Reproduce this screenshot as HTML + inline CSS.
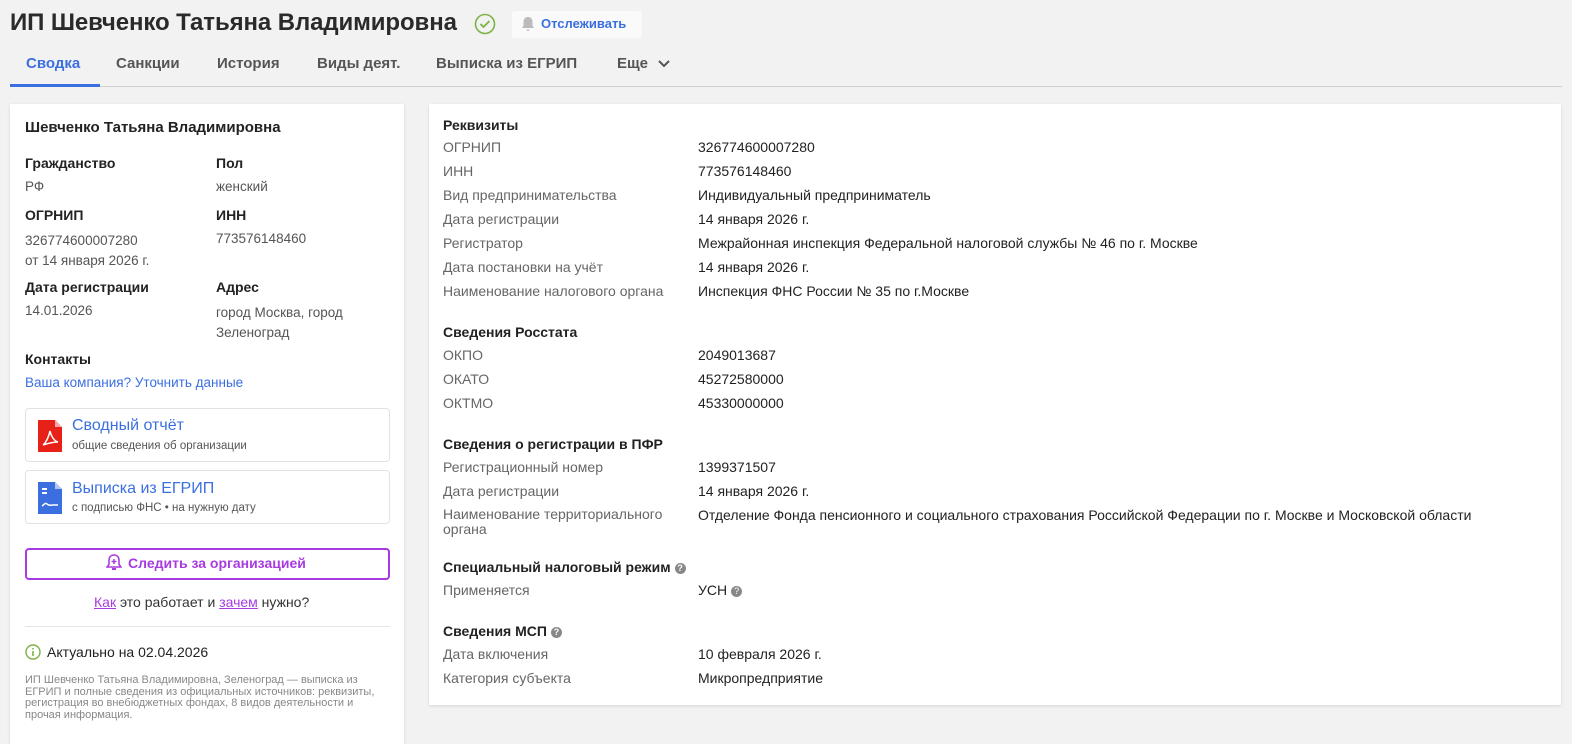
<!DOCTYPE html>
<html><head><meta charset="utf-8"><style>
body{margin:0;background:#f2f2f2;font-family:"Liberation Sans",sans-serif;color:#222;width:1572px;height:726px;overflow:hidden;position:relative}
.a{position:absolute;white-space:nowrap}
h1{position:absolute;left:10px;top:9px;margin:0;font-size:24px;font-weight:bold;color:#2a2a2a;letter-spacing:-0.1px}
.tab{position:absolute;top:55px;font-size:15px;font-weight:bold;color:#555}
.card{position:absolute;background:#fff;box-shadow:0 1px 3px rgba(0,0,0,.12)}
.lb{font-size:14px;font-weight:bold;color:#222}
.v{font-size:13.5px;color:#555}
.r .l{position:absolute;left:14px;font-size:14px;color:#666;white-space:nowrap}
.r .x{position:absolute;left:269px;font-size:14px;color:#222;white-space:nowrap}
.h{position:absolute;left:14px;font-size:14px;font-weight:bold}
.q{display:inline-block;width:11px;height:11px;border-radius:50%;background:#888;color:#fff;font-size:9px;text-align:center;line-height:11px;vertical-align:1px;margin-left:4px}
.box{position:absolute;left:15px;width:363px;border:1px solid #e2e2e2;border-radius:4px;height:52px}
</style></head><body>
<h1>ИП Шевченко Татьяна Владимировна</h1>
<svg class="a" style="left:474px;top:13px" width="22" height="22"><circle cx="11" cy="11" r="9.5" fill="none" stroke="#7cb342" stroke-width="1.6"/><path d="M6.5 11l3 3 6-6" fill="none" stroke="#7cb342" stroke-width="1.8"/></svg>
<div class="a" style="left:512px;top:11px;width:130px;height:27px;background:#fafafa;border-radius:3px"></div>
<svg class="a" style="left:521px;top:16px" width="14" height="16"><path d="M7 1c-3 0-4.5 2.5-4.5 5v4L1 12h12l-1.5-2V6C11.5 3.5 10 1 7 1zM5.5 13.5a1.5 1.5 0 003 0z" fill="#bbb"/></svg>
<div class="a" style="left:541px;top:16px;font-size:13px;font-weight:bold;color:#3b6fe0">Отслеживать</div>
<div class="tab" style="left:26px;color:#3b6fe0">Сводка</div>
<div class="tab" style="left:116px">Санкции</div>
<div class="tab" style="left:217px">История</div>
<div class="tab" style="left:317px">Виды деят.</div>
<div class="tab" style="left:436px">Выписка из ЕГРИП</div>
<div class="tab" style="left:617px">Еще</div>
<svg class="a" style="left:657px;top:59px" width="14" height="10"><path d="M2 2l5 5 5-5" fill="none" stroke="#555" stroke-width="2"/></svg>
<div class="a" style="left:10px;top:86px;width:1552px;height:1px;background:#cfcfcf"></div>
<div class="a" style="left:10px;top:84px;width:90px;height:3px;background:#3b6fe0"></div>

<div class="card" style="left:10px;top:104px;width:394px;height:640px">
<div class="a lb" style="left:15px;top:15px;font-size:15px">Шевченко Татьяна Владимировна</div>
<div class="a lb" style="left:15px;top:51px">Гражданство</div><div class="a v" style="left:15px;top:75px">РФ</div>
<div class="a lb" style="left:206px;top:51px">Пол</div><div class="a v" style="left:206px;top:75px">женский</div>
<div class="a lb" style="left:15px;top:103px">ОГРНИП</div><div class="a v" style="left:15px;top:127px;line-height:20px">326774600007280<br>от 14 января 2026 г.</div>
<div class="a lb" style="left:206px;top:103px">ИНН</div><div class="a v" style="left:206px;top:127px">773576148460</div>
<div class="a lb" style="left:15px;top:175px">Дата регистрации</div><div class="a v" style="left:15px;top:199px">14.01.2026</div>
<div class="a lb" style="left:206px;top:175px">Адрес</div><div class="a v" style="left:206px;top:199px;line-height:20px">город Москва, город<br>Зеленоград</div>
<div class="a lb" style="left:15px;top:247px">Контакты</div>
<div class="a" style="left:15px;top:271px;font-size:13.5px;color:#3b6fe0">Ваша компания? Уточнить данные</div>
<div class="box" style="top:304px"></div>
<svg class="a" style="left:28px;top:316px" width="24" height="32"><path d="M0 0h17l7 7v25H0z" fill="#e62117"/><path d="M17 0v7h7" fill="#fff" opacity=".6"/><path d="M5 25c3-2 6-9 7-14 1 5 4 10 8 11-4 0-9 1-15 3z" fill="none" stroke="#fff" stroke-width="1.5"/></svg>
<div class="a" style="left:62px;top:313px;font-size:16px;color:#3b6fe0">Сводный отчёт</div>
<div class="a" style="left:62px;top:336px;font-size:11.5px;color:#555">общие сведения об организации</div>
<div class="box" style="top:366px"></div>
<svg class="a" style="left:28px;top:378px" width="24" height="32"><path d="M0 0h17l7 7v25H0z" fill="#3b6fe0"/><path d="M17 0v7h7" fill="#fff" opacity=".6"/><path d="M4 7h5M4 11h5" stroke="#fff" stroke-width="2"/><path d="M4 24c2-1 3-4 5-2s4 1 6 1h5" fill="none" stroke="#fff" stroke-width="1.5"/></svg>
<div class="a" style="left:62px;top:376px;font-size:16px;color:#3b6fe0">Выписка из ЕГРИП</div>
<div class="a" style="left:62px;top:398px;font-size:11.5px;color:#555">с подписью ФНС • на нужную дату</div>
<div class="a" style="left:15px;top:444px;width:361px;height:28px;border:2px solid #a83be0;border-radius:4px"></div>
<svg class="a" style="left:96px;top:450px" width="16" height="18"><path d="M8 1c-3.5 0-5 2.5-5 5.5v4L1 13h14l-2-2.5v-4C13 3.5 11.5 1 8 1z" fill="none" stroke="#a83be0" stroke-width="1.6"/><path d="M8 5v5M5.5 7.5h5" stroke="#a83be0" stroke-width="1.5"/><path d="M6 15h4" stroke="#a83be0" stroke-width="2"/></svg>
<div class="a" style="left:118px;top:451px;font-size:14px;font-weight:bold;color:#a83be0">Следить за организацией</div>
<div class="a" style="left:84px;top:490px;font-size:14px;color:#333"><u style="color:#a83be0">Как</u> это работает и <u style="color:#a83be0">зачем</u> нужно?</div>
<div class="a" style="left:15px;top:522px;width:365px;height:1px;background:#e5e5e5"></div>
<svg class="a" style="left:15px;top:540px" width="16" height="16"><circle cx="8" cy="8" r="7" fill="none" stroke="#7cb342" stroke-width="1.4"/><path d="M8 7v5M8 4v1.5" stroke="#7cb342" stroke-width="1.6"/></svg>
<div class="a" style="left:37px;top:540px;font-size:14px;color:#222">Актуально на 02.04.2026</div>
<div class="a" style="left:15px;top:571px;font-size:11px;color:#888;line-height:11.5px;white-space:normal;width:362px">ИП Шевченко Татьяна Владимировна, Зеленоград — выписка из ЕГРИП и полные сведения из официальных источников: реквизиты, регистрация во внебюджетных фондах, 8 видов деятельности и прочая информация.</div>
</div>

<div class="card r" style="left:429px;top:104px;width:1132px;height:601px">
<div class="h" style="top:13px">Реквизиты</div>
<div class="l" style="top:35px">ОГРНИП</div><div class="x" style="top:35px">326774600007280</div>
<div class="l" style="top:59px">ИНН</div><div class="x" style="top:59px">773576148460</div>
<div class="l" style="top:83px">Вид предпринимательства</div><div class="x" style="top:83px">Индивидуальный предприниматель</div>
<div class="l" style="top:107px">Дата регистрации</div><div class="x" style="top:107px">14 января 2026 г.</div>
<div class="l" style="top:131px">Регистратор</div><div class="x" style="top:131px">Межрайонная инспекция Федеральной налоговой службы № 46 по г. Москве</div>
<div class="l" style="top:155px">Дата постановки на учёт</div><div class="x" style="top:155px">14 января 2026 г.</div>
<div class="l" style="top:179px">Наименование налогового органа</div><div class="x" style="top:179px">Инспекция ФНС России № 35 по г.Москве</div>
<div class="h" style="top:220px">Сведения Росстата</div>
<div class="l" style="top:243px">ОКПО</div><div class="x" style="top:243px">2049013687</div>
<div class="l" style="top:267px">ОКАТО</div><div class="x" style="top:267px">45272580000</div>
<div class="l" style="top:291px">ОКТМО</div><div class="x" style="top:291px">45330000000</div>
<div class="h" style="top:332px">Сведения о регистрации в ПФР</div>
<div class="l" style="top:355px">Регистрационный номер</div><div class="x" style="top:355px">1399371507</div>
<div class="l" style="top:379px">Дата регистрации</div><div class="x" style="top:379px">14 января 2026 г.</div>
<div class="l" style="top:403px;line-height:15px">Наименование территориального<br>органа</div><div class="x" style="top:403px">Отделение Фонда пенсионного и социального страхования Российской Федерации по г. Москве и Московской области</div>
<div class="h" style="top:455px">Специальный налоговый режим<span class="q">?</span></div>
<div class="l" style="top:478px">Применяется</div><div class="x" style="top:478px">УСН<span class="q">?</span></div>
<div class="h" style="top:519px">Сведения МСП<span class="q">?</span></div>
<div class="l" style="top:542px">Дата включения</div><div class="x" style="top:542px">10 февраля 2026 г.</div>
<div class="l" style="top:566px">Категория субъекта</div><div class="x" style="top:566px">Микропредприятие</div>
</div>
</body></html>
